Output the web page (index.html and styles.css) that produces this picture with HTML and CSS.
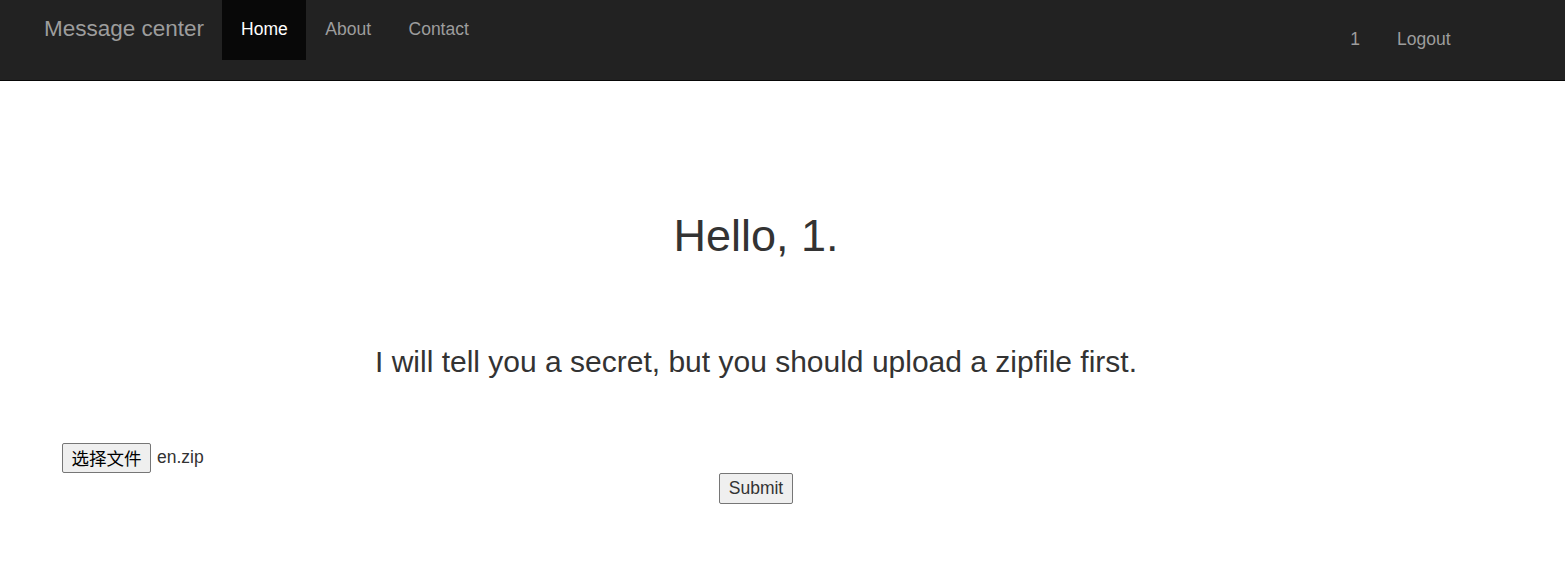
FILE: index.html
```html
<!DOCTYPE html>
<html lang="en">
<head>
<meta charset="utf-8">
<title>Message center</title>
<link rel="stylesheet" href="styles.css">
</head>
<body>
<nav class="navbar">
  <div class="nav-left">
    <a class="brand" href="#">Message center</a>
    <ul class="nav">
      <li><a class="active" href="#">Home</a></li>
      <li><a href="#">About</a></li>
      <li><a href="#">Contact</a></li>
    </ul>
  </div>
  <ul class="nav nav-right">
    <li><a href="#">1</a></li>
    <li><a href="#">Logout</a></li>
  </ul>
</nav>
<main class="content">
  <h1 class="hello">Hello, 1.</h1>
  <h3 class="secret">I will tell you a secret, but you should upload a zipfile first.</h3>
  <form class="upload">
    <div class="file-row"><button type="button" class="btn file-btn">选择文件</button><span class="file-name">en.zip</span></div>
    <div class="submit-row"><button type="button" class="btn submit-btn">Submit</button></div>
  </form>
</main>
</body>
</html>
```

FILE: styles.css
```css
html, body {
  margin: 0;
  padding: 0;
  background: #fff;
  font-family: "Liberation Sans", Arial, sans-serif;
  color: #333;
}
a { text-decoration: none; }
ul { list-style: none; margin: 0; padding: 0; }

.navbar {
  height: 80px;
  background: #222;
  border-bottom: 1px solid #080808;
  display: flex;
  justify-content: space-between;
  align-items: flex-start;
}
.nav-left {
  display: flex;
  align-items: flex-start;
  padding-left: 25px;
}
.brand {
  font-size: 22.5px;
  color: #9d9d9d;
  padding: 0 18px 0 19px;
  line-height: 58px;
  height: 60px;
}
.nav {
  display: flex;
}
.nav a {
  display: block;
  font-size: 17.5px;
  color: #9d9d9d;
  line-height: 58px;
  height: 60px;
  padding: 0 18.5px 0 19px;
}
.nav a.active {
  background: #080808;
  color: #fff;
}
.nav-right {
  margin-top: 10px;
  margin-right: 96px;
}
.nav-right a {
  padding: 0 18.5px;
}

.content {
  margin-left: 62px;
  width: 1388px;
}
.hello {
  margin: 128px 0 0;
  text-align: center;
  font-size: 45px;
  font-weight: 500;
  line-height: 54px;
}
.secret {
  margin: 81px 0 0;
  text-align: center;
  font-size: 30px;
  font-weight: 500;
  line-height: 36px;
}
.upload {
  margin-top: 62px;
}
.file-row {
  display: flex;
  align-items: center;
  height: 31px;
}
.btn {
  font-family: "Liberation Sans", "Noto Sans CJK SC", Arial, sans-serif;
  font-size: 17.5px;
  color: #000;
  background: #efefef;
  border: 1px solid #767676;
  border-radius: 2px;
  margin: 0;
}
.file-btn {
  height: 30px;
  width: 89px;
  padding: 0;
}
.file-name {
  font-size: 17.5px;
  margin-left: 6px;
  color: #333;
}
.submit-row {
  display: flex;
  justify-content: center;
}
.submit-btn {
  height: 31px;
  width: 74px;
  padding: 0;
  color: #333;
}
```
